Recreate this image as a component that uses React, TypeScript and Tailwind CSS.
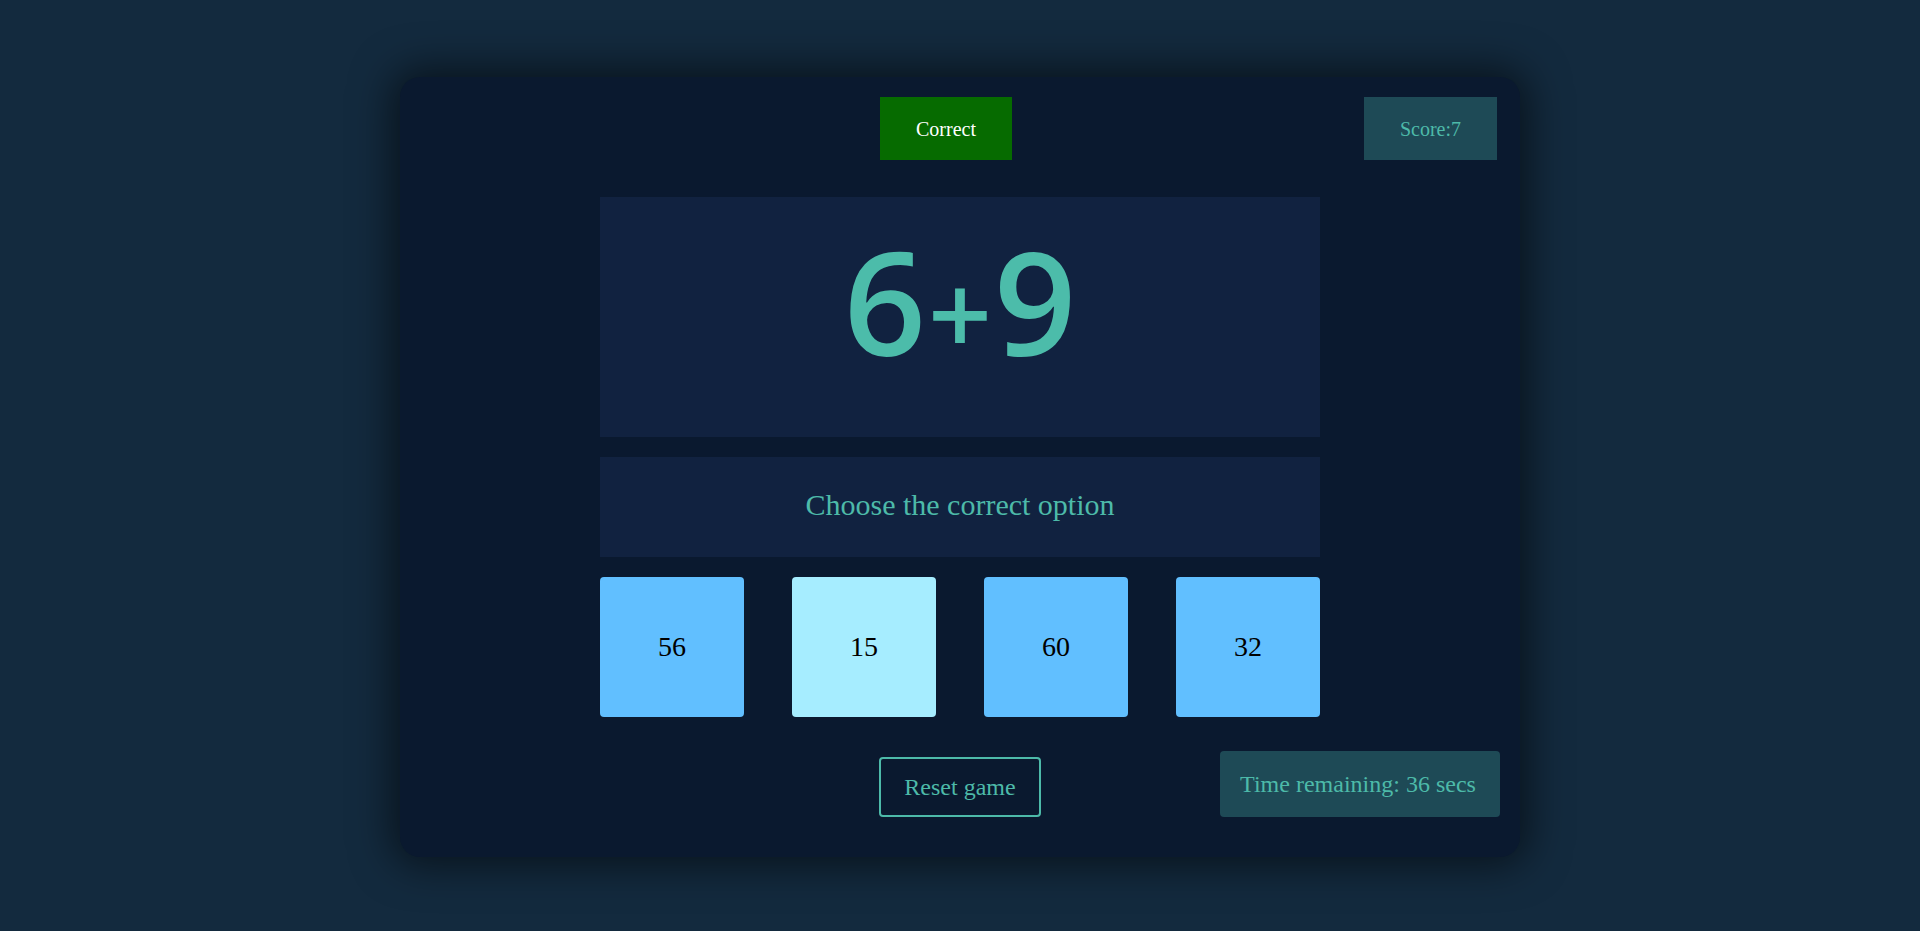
import React from "react";

const serif = { fontFamily: '"Liberation Serif", "Times New Roman", serif' };

export default function App() {
  const options = [
    { v: "56", sel: false },
    { v: "15", sel: true },
    { v: "60", sel: false },
    { v: "32", sel: false },
  ];
  return (
    <div className="min-h-[931px] w-full bg-[#132a3e] pt-[77px]" style={serif}>
      <div className="mx-auto flex h-[780px] w-[1120px] flex-col rounded-[20px] bg-[#0a192f] pt-[20px] shadow-[0_0_40px_8px_rgba(0,0,0,0.55)]">
        <div className="flex h-[63px] items-center justify-between pl-[480px] pr-[23px]">
          <div className="flex h-[63px] w-[132px] items-center justify-center bg-[#066b00] text-[20px] text-white">
            Correct
          </div>
          <div className="flex h-[63px] w-[133px] items-center justify-center bg-[#1e4a56] text-[20px] text-[#4dbaa9]">
            Score:7
          </div>
        </div>
        <div className="mx-auto mt-[37px] flex w-[720px] flex-col gap-[20px]">
          <div className="flex h-[240px] justify-center bg-[#112240] pt-[10px]">
            <span
              className="text-[144px] font-semibold leading-[1.3] text-[#4cbcaa]"
              style={{ fontFamily: '"Comic Sans MS", "Open Sans", sans-serif' }}
            >
              6<span className="mx-[2px] text-[112px]">+</span>9
            </span>
          </div>
          <div className="flex h-[100px] items-center justify-center bg-[#112240] pb-[6px] text-[30px] text-[#4dbaa9]">
            Choose the correct option
          </div>
          <div className="flex justify-between">
            {options.map((o) => (
              <div
                key={o.v}
                className={
                  o.sel
                    ? "flex h-[140px] w-[144px] items-center justify-center rounded-[4px] bg-[#a6edff] text-[28px] text-black"
                    : "flex h-[140px] w-[144px] items-center justify-center rounded-[4px] bg-[#61bfff] text-[28px] text-black"
                }
              >
                {o.v}
              </div>
            ))}
          </div>
        </div>
        <div className="mt-[34px] flex items-end justify-between pl-[479px] pr-[20px]">
          <div className="flex h-[60px] w-[162px] items-center justify-center rounded-[4px] border-2 border-[#4dbaa9] text-[24px] text-[#4dbaa9]">
            Reset game
          </div>
          <div className="flex h-[66px] w-[280px] items-center justify-center rounded-[4px] bg-[#1e4a56] pr-[4px] text-[24px] text-[#4dbaa9]">
            Time remaining: 36 secs
          </div>
        </div>
      </div>
    </div>
  );
}
